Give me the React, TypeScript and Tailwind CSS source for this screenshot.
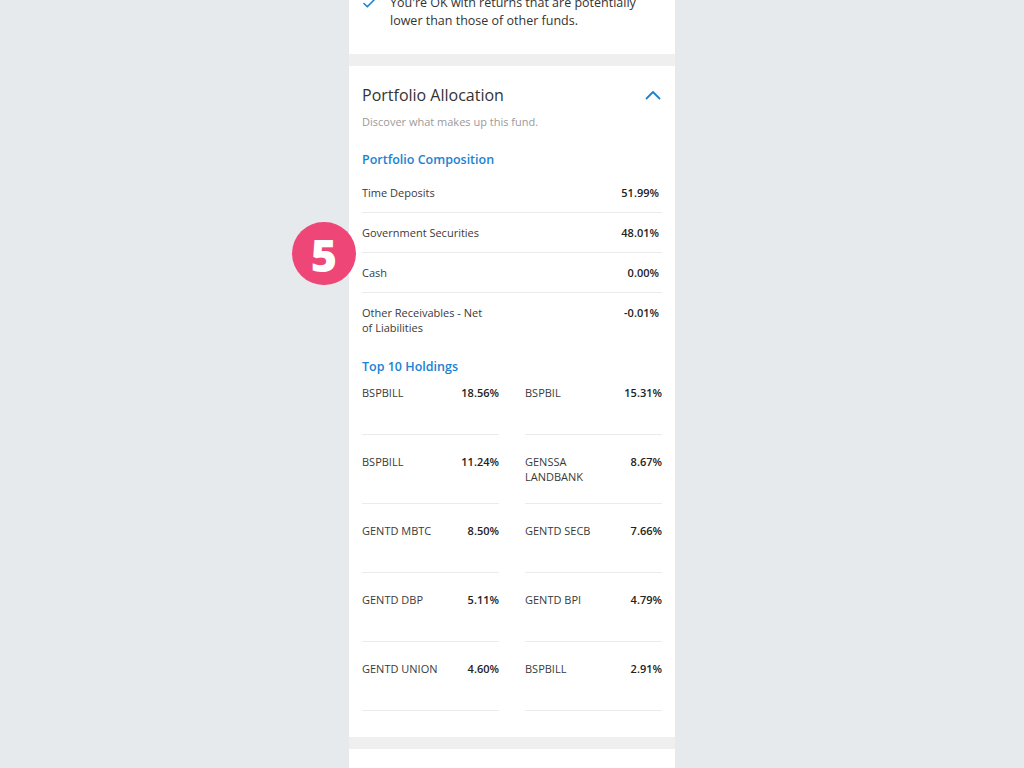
import React from "react";

const composition = [
  { label: "Time Deposits", value: "51.99%" },
  { label: "Government Securities", value: "48.01%" },
  { label: "Cash", value: "0.00%" },
  { label: "Other Receivables - Net of Liabilities", value: "-0.01%" },
];

const holdings = [
  { name: "BSPBILL", value: "18.56%" },
  { name: "BSPBIL", value: "15.31%" },
  { name: "BSPBILL", value: "11.24%" },
  { name: "GENSSA LANDBANK", value: "8.67%" },
  { name: "GENTD MBTC", value: "8.50%" },
  { name: "GENTD SECB", value: "7.66%" },
  { name: "GENTD DBP", value: "5.11%" },
  { name: "GENTD BPI", value: "4.79%" },
  { name: "GENTD UNION", value: "4.60%" },
  { name: "BSPBILL", value: "2.91%" },
];

export default function App() {
  return (
    <div
      className="h-[768px] overflow-hidden bg-[#e7eaed] flex justify-center items-start"
      style={{ fontFamily: '"Open Sans", "Noto Sans", sans-serif' }}
    >
      <div className="w-[326px] flex flex-col -mt-[6px]">
        {/* Card 1 (cut off) */}
        <div className="shrink-0 bg-white px-[13px] pb-[24px]">
          <div className="flex gap-[14px]">
            <div className="w-[14px] h-[18px] shrink-0 flex items-center justify-center">
              <svg width="12" height="9" viewBox="0 0 12 9" fill="none">
                <path d="M1 4.5 L4.3 7.8 L11 1" stroke="#1a82d2" strokeWidth="1.6" strokeLinecap="round" strokeLinejoin="round" />
              </svg>
            </div>
            <p className="w-[262px] text-[12.5px] leading-[18px] text-[#333333]">
              You're OK with returns that are potentially lower than those of other funds.
            </p>
          </div>
        </div>

        <div className="shrink-0 h-[12px] bg-[#efefef]" />

        {/* Card 2 */}
        <div className="shrink-0 relative bg-white px-[13px] pt-[17px] pb-[26px]">
          <div className="absolute left-[-57px] top-[156px] w-[64px] h-[63px] rounded-full bg-[#ee4677] flex items-center justify-center text-white text-[45px] font-extrabold leading-none">
            <span className="mt-[1px]">5</span>
          </div>

          <div className="flex items-center justify-between">
            <h2 className="text-[16px] leading-[24px] text-[#333333]">Portfolio Allocation</h2>
            <svg width="16" height="10" viewBox="0 0 16 10" fill="none" className="mr-[1px]">
              <path d="M1.5 8.5 L8 2 L14.5 8.5" stroke="#1a82d2" strokeWidth="1.8" strokeLinecap="round" strokeLinejoin="round" />
            </svg>
          </div>
          <p className="mt-[7px] text-[11px] leading-[16px] text-[#9a9a9a]">Discover what makes up this fund.</p>

          <h3 className="mt-[20px] text-[12.5px] leading-[20px] font-semibold text-[#1a82d2]">Portfolio Composition</h3>
          <div className="mt-[3px] flex flex-col">
            {composition.map((row, i) => (
              <div
                key={i}
                className={`flex justify-between pt-[12px] pb-[12px] ${i < composition.length - 1 ? "border-b border-[#ebebeb]" : ""}`}
              >
                <span className="w-[128px] text-[11px] leading-[15px] text-[#3a3a3a]">{row.label}</span>
                <span className="pr-[3px] text-[11px] leading-[15px] font-semibold text-[#222222]">{row.value}</span>
              </div>
            ))}
          </div>

          <h3 className="mt-[10px] text-[12.5px] leading-[20px] font-semibold text-[#1a82d2]">Top 10 Holdings</h3>
          <div className="mt-[8px] grid grid-cols-2 gap-x-[26px] gap-y-[19px]">
            {holdings.map((h, i) => (
              <div key={i} className="h-[50px] border-b border-[#ebebeb] flex justify-between">
                <span className="w-[80px] text-[11px] leading-[15px] text-[#3a3a3a]">{h.name}</span>
                <span className="text-[11px] leading-[15px] font-semibold text-[#222222]">{h.value}</span>
              </div>
            ))}
          </div>
        </div>

        <div className="h-[12px] bg-[#efefef] shrink-0" />
        <div className="bg-white h-[100px] shrink-0" />
      </div>
    </div>
  );
}
